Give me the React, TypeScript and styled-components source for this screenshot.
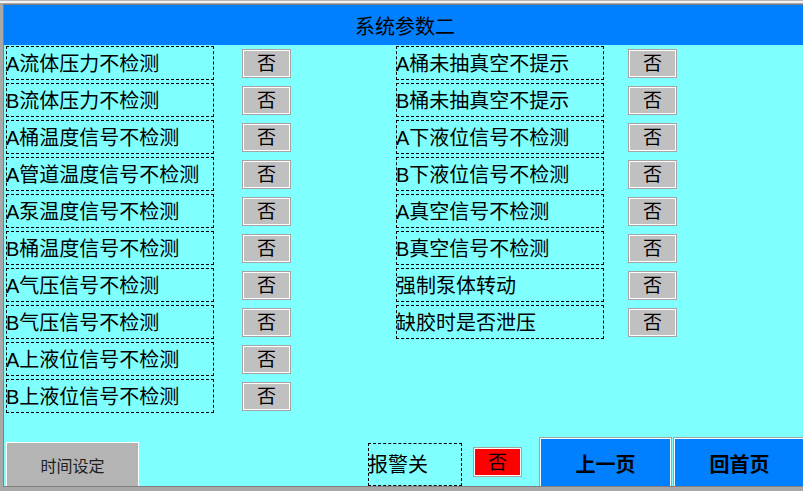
import React from "react";
import styled, { createGlobalStyle } from "styled-components";

const GlobalStyle = createGlobalStyle`
    html, body {
        margin: 0;
        padding: 0;
        overflow: hidden;
    }
    body {
        font-family: "Liberation Sans", "Noto Sans CJK SC", sans-serif;
        color: #000;
    }
`;

const Frame = styled.div`
    width: 803px;
    height: 491px;
    box-sizing: border-box;
    background: #a8a8a8;
    padding-bottom: 4px;
    display: flex;
    flex-direction: column;
`;

const Chrome = styled.div`
    flex: none;
    height: 4px;
    background: linear-gradient(#b8b8b8 0 1px, #f2f2f2 1px 3px, #a8a8a8 3px 4px);
`;

const Shell = styled.div`
    flex: 1;
    display: flex;
    padding-left: 3px;
    min-height: 0;
`;

const Panel = styled.div`
    flex: 1;
    display: flex;
    flex-direction: column;
    border-left: 1px solid #808080;
    border-top: 1px solid #808080;
    border-bottom: 1px solid #808080;
`;

const Header = styled.div`
    flex: none;
    height: 40px;
    box-sizing: border-box;
    padding-top: 3px;
    background: #0080ff;
    display: flex;
    align-items: center;
    justify-content: center;
    font-size: 20px;
    line-height: 1;
`;

const Body = styled.div`
    flex: 1;
    background: #80ffff;
    display: flex;
    flex-direction: column;
    padding: 1px 0 0 2px;
    min-height: 0;
`;

const Columns = styled.div`
    display: flex;
`;

const Column = styled.div<{ $width?: number }>`
    width: ${(p) => (p.$width ? `${p.$width}px` : "auto")};
    display: flex;
    flex-direction: column;
`;

const Row = styled.div`
    display: flex;
    align-items: center;
    height: 34px;
    margin-bottom: 3px;
`;

const Label = styled.div`
    width: 208px;
    height: 34px;
    box-sizing: border-box;
    border: 1px dashed #000;
    display: flex;
    align-items: center;
    font-size: 20px;
    line-height: 1;
    white-space: nowrap;
    padding-top: 1px;
    text-indent: -1px;
`;

const ToggleButton = styled.button<{ $bg?: string; $gap?: number }>`
    width: 49px;
    height: 29px;
    margin: 0 0 0 ${(p) => p.$gap ?? 28}px;
    padding: 0;
    box-sizing: border-box;
    background: ${(p) => p.$bg || "#c0c0c0"};
    border: 1px solid #a4a4a4;
    box-shadow: inset 0 0 0 1px #fff;
    font-family: inherit;
    font-size: 19px;
    line-height: 1;
    color: #000;
    display: flex;
    align-items: center;
    justify-content: center;
`;

const BottomBar = styled.div`
    margin-top: auto;
    height: 49px;
    display: flex;
    align-items: flex-end;
`;

const TimeButton = styled.button`
    width: 133px;
    height: 44px;
    margin: 0;
    padding: 0;
    box-sizing: border-box;
    background: #b4b4b4;
    border: 1px solid #fff;
    border-bottom: none;
    font-family: inherit;
    font-size: 16px;
    color: #202020;
`;

const AlarmBox = styled.div`
    width: 94px;
    height: 43px;
    margin-left: 229px;
    box-sizing: border-box;
    border: 1px dashed #000;
    display: flex;
    align-items: center;
    font-size: 20px;
    line-height: 1;
    text-indent: -1px;
`;

const AlarmToggle = styled(ToggleButton)`
    height: 30px;
    margin: 0 0 9px 11px;
`;

const NavButton = styled.button<{ $gap: number; $grow?: boolean }>`
    width: 133px;
    flex: ${(p) => (p.$grow ? 1 : "none")};
    height: 49px;
    margin: 0 0 0 ${(p) => p.$gap}px;
    padding: 2px 0 0;
    box-sizing: border-box;
    background: #0080ff;
    border: 1px solid #a4a4a4;
    border-bottom: none;
    box-shadow: inset 1px 1px 0 #fff, inset -1px 0 0 #fff;
    font-family: inherit;
    font-size: 20px;
    font-weight: bold;
    color: #000;
`;

const leftItems = [
    "A流体压力不检测",
    "B流体压力不检测",
    "A桶温度信号不检测",
    "A管道温度信号不检测",
    "A泵温度信号不检测",
    "B桶温度信号不检测",
    "A气压信号不检测",
    "B气压信号不检测",
    "A上液位信号不检测",
    "B上液位信号不检测",
];

const rightItems = [
    "A桶未抽真空不提示",
    "B桶未抽真空不提示",
    "A下液位信号不检测",
    "B下液位信号不检测",
    "A真空信号不检测",
    "B真空信号不检测",
    "强制泵体转动",
    "缺胶时是否泄压",
];

const App: React.FC = () => {
    return (
        <>
            <GlobalStyle />
            <Frame>
                <Chrome />
                <Shell>
                    <Panel>
                        <Header>系统参数二</Header>
                        <Body>
                            <Columns>
                                <Column $width={390}>
                                    {leftItems.map((text) => (
                                        <Row key={text}>
                                            <Label>{text}</Label>
                                            <ToggleButton>否</ToggleButton>
                                        </Row>
                                    ))}
                                </Column>
                                <Column>
                                    {rightItems.map((text) => (
                                        <Row key={text}>
                                            <Label>{text}</Label>
                                            <ToggleButton $gap={24}>否</ToggleButton>
                                        </Row>
                                    ))}
                                </Column>
                            </Columns>
                            <BottomBar>
                                <TimeButton>时间设定</TimeButton>
                                <AlarmBox>报警关</AlarmBox>
                                <AlarmToggle $bg="#ff0000">否</AlarmToggle>
                                <NavButton $gap={17}>上一页</NavButton>
                                <NavButton $gap={1} $grow>回首页</NavButton>
                            </BottomBar>
                        </Body>
                    </Panel>
                </Shell>
            </Frame>
        </>
    );
};

export default App;
